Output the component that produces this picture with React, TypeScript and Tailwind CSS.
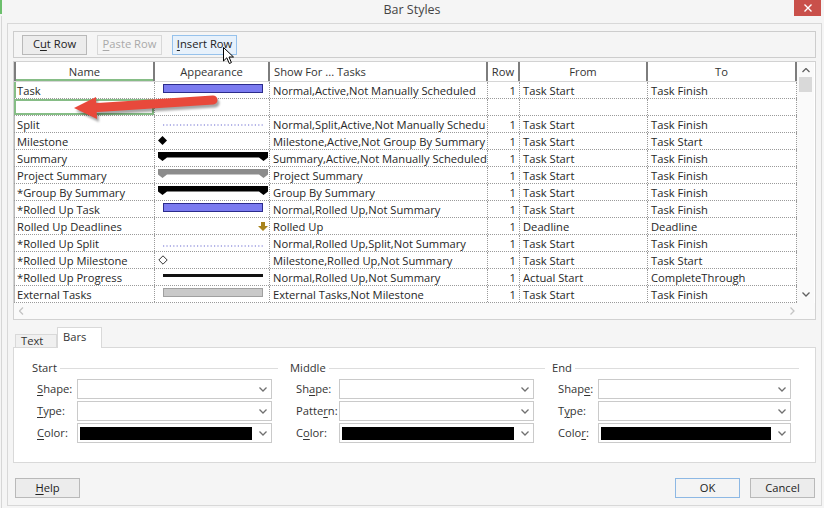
import React from "react";

type Row = { name: string; app: string; show: string; row: string; from: string; to: string };

const rows: Row[] = [
  { name: "Task", app: "task", show: "Normal,Active,Not Manually Scheduled", row: "1", from: "Task Start", to: "Task Finish" },
  { name: "", app: "", show: "", row: "", from: "", to: "" },
  { name: "Split", app: "split", show: "Normal,Split,Active,Not Manually Schedu", row: "1", from: "Task Start", to: "Task Finish" },
  { name: "Milestone", app: "milestone", show: "Milestone,Active,Not Group By Summary", row: "1", from: "Task Start", to: "Task Start" },
  { name: "Summary", app: "summary", show: "Summary,Active,Not Manually Scheduled", row: "1", from: "Task Start", to: "Task Finish" },
  { name: "Project Summary", app: "project", show: "Project Summary", row: "1", from: "Task Start", to: "Task Finish" },
  { name: "*Group By Summary", app: "summary", show: "Group By Summary", row: "1", from: "Task Start", to: "Task Finish" },
  { name: "*Rolled Up Task", app: "task", show: "Normal,Rolled Up,Not Summary", row: "1", from: "Task Start", to: "Task Finish" },
  { name: "Rolled Up Deadlines", app: "deadline", show: "Rolled Up", row: "1", from: "Deadline", to: "Deadline" },
  { name: "*Rolled Up Split", app: "split2", show: "Normal,Rolled Up,Split,Not Summary", row: "1", from: "Task Start", to: "Task Finish" },
  { name: "*Rolled Up Milestone", app: "hollow", show: "Milestone,Rolled Up,Not Summary", row: "1", from: "Task Start", to: "Task Start" },
  { name: "*Rolled Up Progress", app: "progress", show: "Normal,Rolled Up,Not Summary", row: "1", from: "Actual Start", to: "CompleteThrough" },
  { name: "External Tasks", app: "external", show: "External Tasks,Not Milestone", row: "1", from: "Task Start", to: "Task Finish" },
];

const cols = "grid grid-cols-[141px_115px_218px_32px_128px_149px]";
const cell = "border-r border-dotted border-[#9a9a9a] overflow-hidden whitespace-nowrap leading-[16px]";

const Chevron = ({ dir = "down", color = "#707070" }: { dir?: string; color?: string }) => {
  const d =
    dir === "down" ? "M0.5 0.5L4 4L7.5 0.5" : dir === "up" ? "M0.5 4L4 0.5L7.5 4" : dir === "left" ? "M4 0.5L0.5 4L4 7.5" : "M0.5 0.5L4 4L0.5 7.5";
  const horiz = dir === "left" || dir === "right";
  return (
    <svg width={horiz ? 5 : 8} height={horiz ? 8 : 5} viewBox={horiz ? "0 0 5 8" : "0 0 8 5"}>
      <path d={d} stroke={color} strokeWidth="1.3" fill="none" />
    </svg>
  );
};

const Appearance = ({ kind }: { kind: string }) => {
  if (kind === "task")
    return <div className="ml-[8px] mt-[2px] h-[9px] w-[100px] border border-[#2b2b8c] bg-[#7b7bf0]" />;
  if (kind === "external")
    return <div className="ml-[8px] mt-[2px] h-[9px] w-[100px] border border-[#a0a0a0] bg-[#c9c9c9]" />;
  if (kind === "split" || kind === "split2")
    return (
      <svg width="100" height="2" className={kind === "split" ? "ml-[8px] mt-[8px]" : "ml-[8px] mt-[10px]"}>
        <line x1="0" y1="1" x2="100" y2="1" stroke="#6b6bd0" strokeWidth="1.2" strokeDasharray="1.2 2.2" />
      </svg>
    );
  if (kind === "milestone")
    return (
      <svg width="9" height="9" className="ml-[3px] mt-[3px]">
        <polygon points="4.5,0 9,4.5 4.5,9 0,4.5" fill="#000" />
      </svg>
    );
  if (kind === "hollow")
    return (
      <svg width="10" height="10" className="ml-[3px] mt-[3px]">
        <polygon points="5,0.8 9.2,5 5,9.2 0.8,5" fill="#fff" stroke="#333" strokeWidth="1" />
      </svg>
    );
  if (kind === "summary" || kind === "project")
    return (
      <svg width="110" height="9" className="ml-[3px] mt-[2px]">
        <path d="M0 0H110V5.5L105.5 9L101 5.5H9L4.5 9L0 5.5Z" fill={kind === "project" ? "#8c8c8c" : "#000"} />
      </svg>
    );
  if (kind === "deadline")
    return (
      <svg width="10" height="9" className="ml-[103px] mt-[4px]">
        <path d="M3 0H7V4H10L5 9L0 4H3Z" fill="#a8841e" />
      </svg>
    );
  if (kind === "progress") return <div className="ml-[8px] mt-[5px] h-[3px] w-[100px] bg-[#111]" />;
  return null;
};

const U = ({ children }: { children: React.ReactNode }) => (
  <span className="underline underline-offset-[2px] decoration-1">{children}</span>
);

const Btn = ({ children, kind = "normal" }: { children: React.ReactNode; kind?: string }) => {
  const look =
    kind === "disabled"
      ? "border-[#d8d8d8] bg-[#f5f5f5] text-[#a9a9a9]"
      : kind === "hover"
        ? "border-[#96c2ec] bg-[#e7f1fb] text-[#222]"
        : kind === "default"
          ? "border-[#8db8e4] bg-[#f4f4f4] text-[#222]"
          : "border-[#b9b9b9] bg-[#ececec] text-[#222]";
  return (
    <div className={`flex h-[20px] w-[65px] items-center justify-center border ${look}`}>{children}</div>
  );
};

const Select = ({ width, color }: { width: string; color?: boolean }) => (
  <div className={`flex h-[20px] items-center border border-[#cacaca] bg-white pl-[2px] pr-[4px] ${width}`}>
    {color ? <div className="mr-[7px] h-[13px] flex-1 bg-black" /> : <div className="flex-1" />}
    <Chevron />
  </div>
);

type Field = { label: React.ReactNode; color?: boolean };

const Group = ({
  title,
  headW,
  labelW,
  selW,
  fields,
  width,
}: {
  title: string;
  headW: string;
  labelW: string;
  selW: string;
  fields: Field[];
  width: string;
}) => (
  <div className={`flex flex-col ${width}`}>
    <div className={`flex h-[14px] items-center gap-[3px] ${headW}`}>
      <span className="text-[#333]">{title}</span>
      <div className="h-px flex-1 bg-[#dddddd]" />
    </div>
    <div className="mt-[4px] flex flex-col gap-[2px] pl-[6px]">
      {fields.map((f, i) => (
        <div key={i} className="flex items-center">
          <div className={`${labelW} text-[#333]`}>{f.label}</div>
          <Select width={selW} color={f.color} />
        </div>
      ))}
    </div>
  </div>
);

export default function App() {
  return (
    <div className="relative h-[508px] w-[824px] overflow-hidden bg-[#f5f5f5] font-['Open_Sans',sans-serif] text-[11.2px] text-[#262626]">
      <div className="absolute left-0 top-0 h-[14px] w-[2px] bg-[#6cbf6c]" />
      <div className="absolute left-[1px] top-[16px] h-[492px] w-px bg-[#d6d6d6]" />

      {/* title bar */}
      <div className="flex h-[23px] items-center justify-center pb-[3px] text-[12.5px] text-[#444]">Bar Styles</div>
      <div className="absolute right-[3px] top-0 flex h-[16px] w-[27px] items-center justify-center bg-[#c9504a]">
        <svg width="8" height="8" viewBox="0 0 8 8">
          <path d="M0.5 0.5L7.5 7.5M7.5 0.5L0.5 7.5" stroke="#fff" strokeWidth="1.4" />
        </svg>
      </div>

      {/* dialog body */}
      <div className="ml-[7px] flex h-[483px] w-[815px] flex-col border border-[#d8d8d8] px-[5px] pt-[7px]">
        {/* toolbar */}
        <div className="flex h-[27px] items-center gap-[10px] border border-[#cdcdcd] pl-[8px]">
          <Btn>
            C<U>u</U>t Row
          </Btn>
          <Btn kind="disabled">
            <U>P</U>aste Row
          </Btn>
          <Btn kind="hover">
            <U>I</U>nsert Row
          </Btn>
        </div>

        {/* table */}
        <div className="mt-[3px] flex h-[259px] flex-col border border-[#d2d2d2] bg-white">
          <div className="flex">
            <div className="w-[783px]">
              <div className={`${cols} h-[20px] border-b border-[#d6d6d6] text-[#333]`}>
                <div className="flex items-center justify-center border-x-2 border-[#7d7d7d] pt-[2px] shadow-[inset_0_-2px_0_#86bd86]">
                  Name
                </div>
                <div className="flex items-center justify-center border-r-2 border-[#7d7d7d] pt-[2px]">Appearance</div>
                <div className="flex items-center border-r-2 border-[#7d7d7d] pl-[4px] pt-[2px]">Show For ... Tasks</div>
                <div className="flex items-center justify-center border-r-2 border-[#7d7d7d] pt-[2px]">Row</div>
                <div className="flex items-center justify-center border-r-2 border-[#7d7d7d] pt-[2px]">From</div>
                <div className="flex items-center justify-center border-r-2 border-[#7d7d7d] pt-[2px]">To</div>
              </div>
              {rows.map((r, i) => (
                <div key={i} className={`${cols} h-[17px] border-b border-dotted border-[#9a9a9a]`}>
                  <div
                    className={`${cell} pl-[3px] pt-px ${
                      i === 0
                        ? "shadow-[inset_2px_0_0_#86bd86]"
                        : i === 1
                          ? "shadow-[inset_0_0_0_2px_#86bd86]"
                          : "shadow-[inset_1px_0_0_#b8b8b8]"
                    }`}
                  >
                    {r.name}
                  </div>
                  <div className={cell}>
                    <Appearance kind={r.app} />
                  </div>
                  <div className={`${cell} pl-[3px] pt-px`}>{r.show}</div>
                  <div className={`${cell} pr-[3px] pt-px text-right`}>{r.row}</div>
                  <div className={`${cell} pl-[3px] pt-px`}>{r.from}</div>
                  <div className={`${cell} pl-[3px] pt-px`}>{r.to}</div>
                </div>
              ))}
            </div>
            {/* vertical scrollbar */}
            <div className="flex h-[241px] w-[17px] flex-col items-center bg-[#fafafa]">
              <div className="mt-[6px]">
                <Chevron dir="up" color="#606060" />
              </div>
              <div className="mt-[4px] h-[15px] w-[13px] bg-[#d9d9d9]" />
              <div className="flex-1" />
              <div className="mb-[6px]">
                <Chevron dir="down" color="#606060" />
              </div>
            </div>
          </div>
          {/* horizontal scrollbar */}
          <div className="flex h-[16px] items-center justify-between bg-[#fafafa] pl-[5px] pr-[20px]">
            <Chevron dir="left" color="#c4c4c4" />
            <Chevron dir="right" color="#c4c4c4" />
          </div>
        </div>

        {/* tabs */}
        <div className="mt-[7px] flex h-[20px] items-end pl-[2px]">
          <div className="-mb-px flex h-[14px] w-[42px] items-center border border-b-0 border-[#d9d9d9] bg-[#f0f0f0] pl-[5px] text-[#333]">
            Text
          </div>
          <div className="relative z-10 -mb-px flex h-[21px] w-[45px] items-start border border-b-0 border-[#d9d9d9] bg-white pl-[5px] pt-[1px] text-[#333]">
            Bars
          </div>
        </div>
        <div className="flex h-[116px] border border-[#d9d9d9] bg-white pl-[18px] pt-[13px]">
          <Group
            title="Start"
            width="w-[258px]"
            headW="w-[246px]"
            labelW="w-[40px] -ml-px"
            selW="w-[195px]"
            fields={[
              { label: <><U>S</U>hape:</> },
              { label: <><U>T</U>ype:</> },
              { label: <><U>C</U>olor:</>, color: true },
            ]}
          />
          <Group
            title="Middle"
            width="w-[262px]"
            headW="w-[255px]"
            labelW="w-[43px]"
            selW="w-[195px]"
            fields={[
              { label: <>Sh<U>a</U>pe:</> },
              { label: <>Patte<U>r</U>n:</> },
              { label: <>C<U>o</U>lor:</>, color: true },
            ]}
          />
          <Group
            title="End"
            width="w-[248px]"
            headW="w-[247px]"
            labelW="w-[40px]"
            selW="w-[193px]"
            fields={[
              { label: <>Shap<U>e</U>:</> },
              { label: <>T<U>y</U>pe:</> },
              { label: <>Colo<U>r</U>:</>, color: true },
            ]}
          />
        </div>

        {/* bottom buttons */}
        <div className="mt-[15px] flex items-center pl-[2px] pr-px">
          <Btn>
            <U>H</U>elp
          </Btn>
          <div className="flex-1" />
          <div className="flex gap-[10px]">
            <Btn kind="default">OK</Btn>
            <Btn>Cancel</Btn>
          </div>
        </div>
      </div>

      {/* red annotation arrow */}
      <svg className="absolute left-[60px] top-[86px]" width="170" height="40" viewBox="0 0 170 40">
        <defs>
          <filter id="sh" x="-10%" y="-30%" width="120%" height="160%">
            <feGaussianBlur stdDeviation="1.2" />
          </filter>
        </defs>
        <g transform="translate(2 3)" fill="#000" opacity="0.35" filter="url(#sh)">
          <line x1="30" y1="22" x2="153" y2="14" stroke="#000" strokeWidth="9" strokeLinecap="round" />
          <polygon points="14,22 36,11 37,33" />
        </g>
        <line x1="30" y1="22" x2="153" y2="14" stroke="#e8493b" strokeWidth="9" strokeLinecap="round" />
        <polygon points="14,22 36,11 37,33" fill="#e8493b" />
      </svg>

      {/* mouse pointer */}
      <svg className="absolute left-[223px] top-[47px]" width="12" height="18" viewBox="0 0 12 18">
        <path d="M0.5 0.5V14L3.8 10.8L6.3 16.5L8.4 15.6L6 10H10.5Z" fill="#fff" stroke="#000" strokeWidth="1" strokeLinejoin="round" />
      </svg>
    </div>
  );
}
